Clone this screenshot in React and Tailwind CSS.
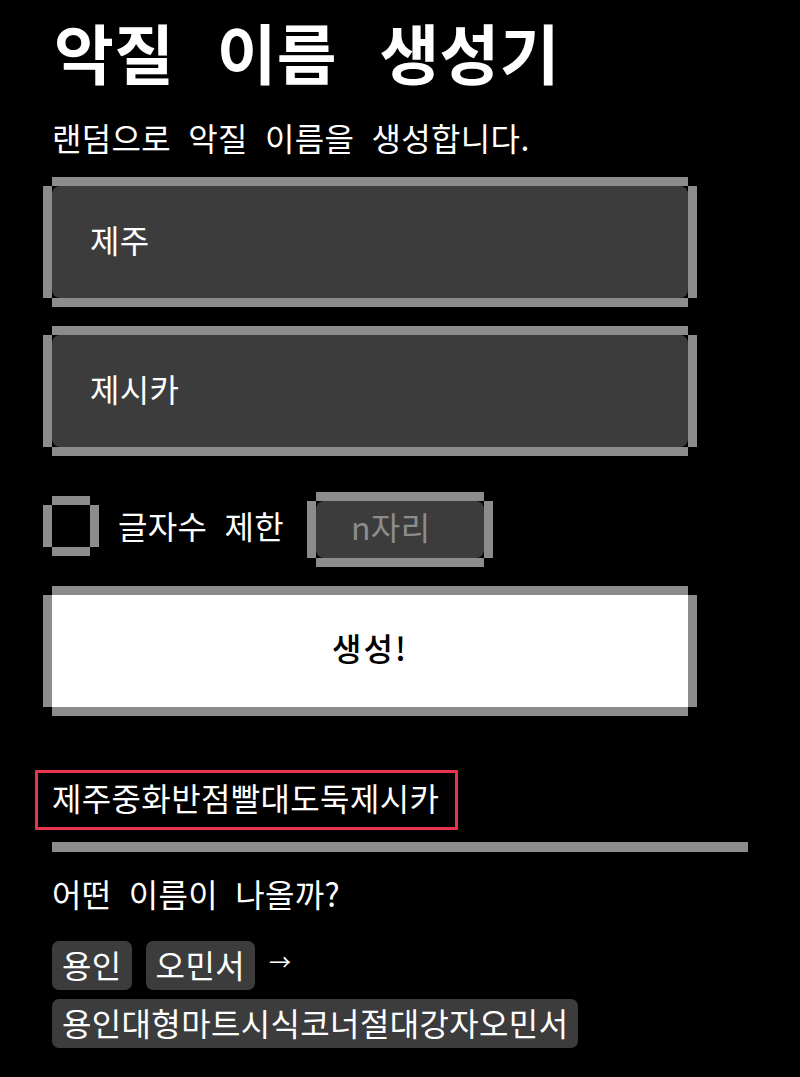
function PixelBox({ children, className = "" }) {
  return (
    <div className={"flex " + className}>
      <div className="w-[9px] my-[9px] bg-[#8c8c8c]" />
      <div className="flex-1 flex flex-col min-w-0">
        <div className="h-[9px] bg-[#8c8c8c]" />
        <div className="flex-1 flex min-h-0">{children}</div>
        <div className="h-[9px] bg-[#8c8c8c]" />
      </div>
      <div className="w-[9px] my-[9px] bg-[#8c8c8c]" />
    </div>
  );
}

const font = "font-['Noto_Sans_CJK_KR','Noto_Sans',sans-serif]";

function Chip({ children }) {
  return (
    <span className="inline-flex items-center h-[49px] pb-[4px] px-[10px] rounded-[7px] bg-[#3c3c3c] text-white">
      {children}
    </span>
  );
}

export default function App() {
  return (
    <div className={"min-h-[1077px] bg-black text-white text-[32px] tracking-[0.35px] leading-[42px] [word-spacing:0.3em] " + font}>
      <h1 className="pl-[54px] h-[104px] pb-[2px] flex items-center text-[65px] leading-none font-bold [word-spacing:0.42em]">
        악질 이름 생성기
      </h1>
      <p className="pl-[52px] h-[42px] mt-[12px]">랜덤으로 악질 이름을 생성합니다.</p>
      <div className="pl-[43px] mt-[19px] w-[697px] flex flex-col gap-[19px]">
        <PixelBox className="h-[130px]">
          <input
            readOnly
            value="제주"
            className="w-full rounded-[8px] bg-[#3c3c3c] pl-[38px] pb-[7px] text-white outline-none"
          />
        </PixelBox>
        <PixelBox className="h-[130px]">
          <input
            readOnly
            value="제시카"
            className="w-full rounded-[8px] bg-[#3c3c3c] pl-[38px] pb-[7px] text-white outline-none"
          />
        </PixelBox>
      </div>
      <div className="pl-[43px] mt-[36px] h-[75px] flex items-center">
        <PixelBox className="h-[60px] w-[56px] shrink-0 mt-[-7px]">
          <span className="flex-1" />
        </PixelBox>
        <span className="ml-[19px] mt-[-9px] w-[189px] shrink-0 whitespace-nowrap">글자수 제한</span>
        <PixelBox className="h-[75px] w-[186px]">
          <input
            readOnly
            placeholder="n자리"
            className="w-full min-w-0 rounded-[8px] bg-[#3c3c3c] pl-[35px] pb-[7px] text-[#8c8c8c] placeholder:text-[#8c8c8c] outline-none"
          />
        </PixelBox>
      </div>
      <div className="pl-[43px] mt-[19px] w-[697px]">
        <PixelBox className="h-[130px]">
          <button className="flex-1 bg-white text-black font-medium tracking-[2px] pb-[9px]">생성!</button>
        </PixelBox>
      </div>
      <div className="ml-[35px] mt-[54px] w-[423px] h-[60px] border-[3px] border-[#e8344e] pl-[14px] pb-[7px] flex items-center whitespace-nowrap">
        제주중화반점빨대도둑제시카
      </div>
      <div className="ml-[52px] mt-[12px] w-[696px] h-[10px] bg-[#8c8c8c]" />
      <p className="pl-[52px] mt-[20px] h-[42px]">어떤 이름이 나올까?</p>
      <div className="pl-[52px] mt-[27px] flex flex-col gap-[9px]">
        <div className="flex items-start gap-[14px]">
          <Chip>용인</Chip>
          <Chip>오민서</Chip>
          <span className="text-[22px] mt-[-2px]">→</span>
        </div>
        <div className="flex">
          <Chip>용인대형마트시식코너절대강자오민서</Chip>
        </div>
      </div>
    </div>
  );
}
